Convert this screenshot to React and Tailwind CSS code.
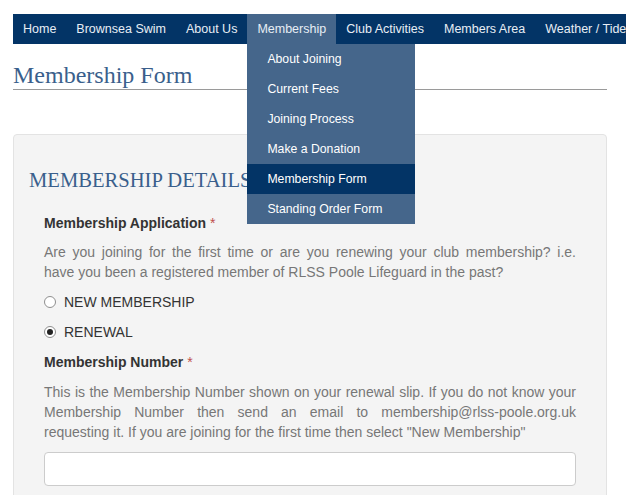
import React from 'react';

const navItems = ['Home', 'Brownsea Swim', 'About Us', 'Membership', 'Club Activities', 'Members Area', 'Weather / Tides'];
const subItems = ['About Joining', 'Current Fees', 'Joining Process', 'Make a Donation', 'Membership Form', 'Standing Order Form'];

const Radio = ({ checked, label }) => (
  <div className="flex items-center h-5 gap-[8px]">
    <span className="w-[12px] h-[12px] rounded-full border border-[#8f8f8f] bg-white flex items-center justify-center">
      {checked && <span className="w-[6px] h-[6px] rounded-full bg-[#222]" />}
    </span>
    <span className="text-[14px] text-[#333] leading-5">{label}</span>
  </div>
);

// justified lines, broken where the reference breaks them
const Para = ({ lines }) => (
  <div className="text-[14px] leading-5 text-[#777]">
    {lines.map((l, i) => (
      <div key={i} className={i < lines.length - 1 ? 'text-justify [text-align-last:justify]' : ''}>{l}</div>
    ))}
  </div>
);

const Label = ({ children }) => (
  <div className="text-[14px] leading-5 font-bold text-[#333]">
    {children} <span className="text-[#c0504d] font-normal">*</span>
  </div>
);

export default function App() {
  return (
    <div className="w-[626px] h-[495px] overflow-hidden bg-white font-['Liberation_Sans',Arial,sans-serif]">
      <div className="pt-[14px] pl-[13px]">
        {/* ── Top nav ── */}
        <nav className="relative w-[700px] h-[30px] bg-[#033466] flex whitespace-nowrap z-10">
          {navItems.map((item) => (
            <div key={item} className={`relative h-[30px] flex items-center px-[10px] text-[12.5px] ${item === 'Membership' ? 'bg-[#45668b] text-[#e8eef5]' : 'text-[#e8eef5]'}`}>
              {item}
              {item === 'Membership' && (
                <div className="absolute left-0 top-[30px] w-[168px] bg-[#45668b]">
                  {subItems.map((s) => (
                    <div key={s} className={`h-[30px] flex items-center pl-[20px] text-[12.25px] text-white ${s === 'Membership Form' ? 'bg-[#033466]' : ''}`}>{s}</div>
                  ))}
                </div>
              )}
            </div>
          ))}
        </nav>

        <div className="w-[594px]">
          <h1 className="mt-[17px] h-[28px] leading-[28px] text-[24px] text-[#3a5f8c] font-['Liberation_Serif',Georgia,serif]">Membership Form</h1>
          <div className="mt-[0px] border-t border-[#9a9a9a]" />

          {/* ── Form panel ── */}
          <div className="mt-[44px] bg-[#f4f4f4] border border-[#e3e3e3] rounded-[4px] pt-[33px] pb-[20px]">
            <h2 className="pl-[15px] h-6 leading-6 text-[20.6px] text-[#3a5f8c] font-['Liberation_Serif',Georgia,serif]">MEMBERSHIP DETAILS</h2>
            <div className="px-[30px] mt-[21px] flex flex-col">
              <Label>Membership Application</Label>
              <div className="mt-[9px]">
                <Para lines={[
                  'Are you joining for the first time or are you renewing your club membership? i.e.',
                  'have you been a registered member of RLSS Poole Lifeguard in the past?',
                ]} />
              </div>
              <div className="mt-[10px]"><Radio label="NEW MEMBERSHIP" /></div>
              <div className="mt-[10px]"><Radio checked label="RENEWAL" /></div>
              <div className="mt-[10px]"><Label>Membership Number</Label></div>
              <div className="mt-[10px]">
                <Para lines={[
                  'This is the Membership Number shown on your renewal slip. If you do not know your',
                  'Membership Number then send an email to membership@rlss-poole.org.uk',
                  'requesting it. If you are joining for the first time then select "New Membership"',
                ]} />
              </div>
              <input className="mt-[10px] h-[34px] bg-white border border-[#cccccc] rounded-[4px] outline-none" />
            </div>
          </div>
        </div>
      </div>
    </div>
  );
}
